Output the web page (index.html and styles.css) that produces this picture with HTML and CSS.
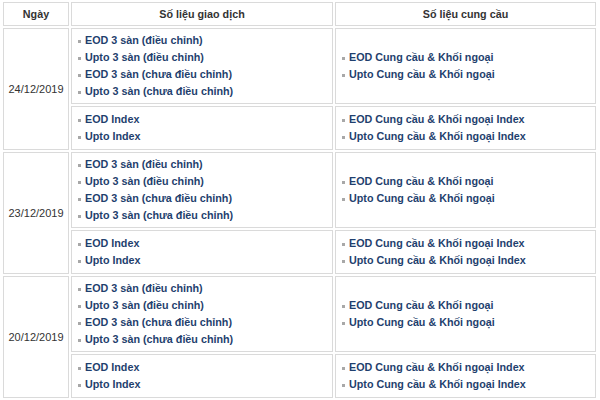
FILE: index.html
```html
<!DOCTYPE html>
<html lang="vi">
<head>
<meta charset="utf-8">
<link rel="stylesheet" href="styles.css">
</head>
<body>
<table class="data">
  <thead>
    <tr>
      <th class="c-date">Ngày</th>
      <th class="c-trade">Số liệu giao dịch</th>
      <th class="c-supply">Số liệu cung cầu</th>
    </tr>
  </thead>
  <tbody>
    <tr class="r1">
      <td class="date" rowspan="2">24/12/2019</td>
      <td><ul class="links"><li>EOD 3 sàn (điều chỉnh)</li><li>Upto 3 sàn (điều chỉnh)</li><li>EOD 3 sàn (chưa điều chỉnh)</li><li>Upto 3 sàn (chưa điều chỉnh)</li></ul></td>
      <td><ul class="links"><li>EOD Cung cầu &amp; Khối ngoại</li><li>Upto Cung cầu &amp; Khối ngoại</li></ul></td>
    </tr>
    <tr class="r2">
      <td><ul class="links"><li>EOD Index</li><li>Upto Index</li></ul></td>
      <td><ul class="links"><li>EOD Cung cầu &amp; Khối ngoại Index</li><li>Upto Cung cầu &amp; Khối ngoại Index</li></ul></td>
    </tr>
    <tr class="r1">
      <td class="date" rowspan="2">23/12/2019</td>
      <td><ul class="links"><li>EOD 3 sàn (điều chỉnh)</li><li>Upto 3 sàn (điều chỉnh)</li><li>EOD 3 sàn (chưa điều chỉnh)</li><li>Upto 3 sàn (chưa điều chỉnh)</li></ul></td>
      <td><ul class="links"><li>EOD Cung cầu &amp; Khối ngoại</li><li>Upto Cung cầu &amp; Khối ngoại</li></ul></td>
    </tr>
    <tr class="r2">
      <td><ul class="links"><li>EOD Index</li><li>Upto Index</li></ul></td>
      <td><ul class="links"><li>EOD Cung cầu &amp; Khối ngoại Index</li><li>Upto Cung cầu &amp; Khối ngoại Index</li></ul></td>
    </tr>
    <tr class="r1">
      <td class="date" rowspan="2">20/12/2019</td>
      <td><ul class="links"><li>EOD 3 sàn (điều chỉnh)</li><li>Upto 3 sàn (điều chỉnh)</li><li>EOD 3 sàn (chưa điều chỉnh)</li><li>Upto 3 sàn (chưa điều chỉnh)</li></ul></td>
      <td><ul class="links"><li>EOD Cung cầu &amp; Khối ngoại</li><li>Upto Cung cầu &amp; Khối ngoại</li></ul></td>
    </tr>
    <tr class="r2">
      <td><ul class="links"><li>EOD Index</li><li>Upto Index</li></ul></td>
      <td><ul class="links"><li>EOD Cung cầu &amp; Khối ngoại Index</li><li>Upto Cung cầu &amp; Khối ngoại Index</li></ul></td>
    </tr>
  </tbody>
</table>
</body>
</html>
```

FILE: styles.css
```css
html, body {
  margin: 0;
  padding: 0;
  background: #fff;
}

body {
  font-family: "Liberation Sans", Arial, sans-serif;
  font-size: 11px;
  color: #333;
}

.data {
  margin: 0 0 0 1px;
  width: 597px;
  table-layout: fixed;
  border-collapse: separate;
  border-spacing: 2px;
}

.data th,
.data td {
  box-sizing: border-box;
  border: 1px solid #dadada;
  padding: 0;
  vertical-align: middle;
}

.data th {
  height: 24px;
  font-size: 10.75px;
  font-weight: bold;
  color: #333;
  text-align: center;
}

.c-date { width: 66px; }
.c-trade { width: 262px; }
.c-supply { width: 261px; }

.date {
  text-align: center;
  color: #333;
}

.r1 td { height: 76px; }
.r2 td { height: 44px; }

.links {
  list-style: none;
  margin: 0;
  padding: 0 0 0 6px;
}

.links li {
  line-height: 17px;
  font-size: 10.75px;
  font-weight: bold;
  color: #1f3f6e;
  white-space: nowrap;
}

.links li::before {
  content: "";
  display: inline-block;
  width: 3px;
  height: 3px;
  background: #a8a8a8;
  margin-right: 4px;
  vertical-align: 1px;
}
```
